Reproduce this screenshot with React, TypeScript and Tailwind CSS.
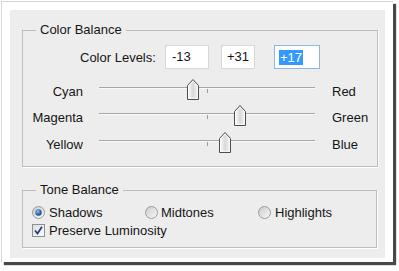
import React from "react";

const TRACK_W = 216;

function Thumb({ value }: { value: number }) {
  const center = TRACK_W / 2 + (value / 100) * (TRACK_W / 2);
  return (
    <svg
      width="12"
      height="21"
      viewBox="0 0 12 21"
      className="absolute top-[1px]"
      style={{ left: Math.round(center - 6) }}
    >
      <defs>
        <linearGradient id={`tg${value}`} x1="0" y1="0" x2="1" y2="0">
          <stop offset="0" stopColor="#ffffff" />
          <stop offset="0.5" stopColor="#d9d9d9" />
          <stop offset="1" stopColor="#f4f4f4" />
        </linearGradient>
      </defs>
      <path
        d="M6 0.5 L11.5 6.5 L11.5 20.5 L0.5 20.5 L0.5 6.5 Z"
        fill={`url(#tg${value})`}
        stroke="#4d4d4d"
        strokeWidth="1"
      />
      <path d="M6 2 L10.3 6.8 L10.3 19.3 L1.7 19.3 L1.7 6.8 Z" fill="none" stroke="#ffffff" strokeWidth="0.8" />
    </svg>
  );
}

function SliderRow({ left, right, value, h }: { left: string; right: string; value: number; h: string }) {
  return (
    <div className={`flex items-center ${h}`}>
      <div className="w-[60px] text-right leading-none">{left}</div>
      <div className="relative ml-[16px] h-full w-[216px]">
        <div className="absolute left-0 right-0 top-[9px] h-[1px] bg-[#a6a6a6]" />
        <div className="absolute left-0 right-0 top-[10px] h-[1px] bg-[#fafafa]" />
        <div className="absolute left-[108px] top-[11px] h-[4px] w-[1px] bg-[#9a9a9a]" />
        <Thumb value={value} />
      </div>
      <div className="ml-[17px] leading-none">{right}</div>
    </div>
  );
}

function Radio({ checked }: { checked?: boolean }) {
  return (
    <svg width="13" height="13" viewBox="0 0 13 13" className="shrink-0">
      <defs>
        <linearGradient id={`rg${checked ? 1 : 0}`} x1="0" y1="0" x2="1" y2="1">
          <stop offset="0" stopColor="#c9c9c9" />
          <stop offset="1" stopColor="#fbfbfb" />
        </linearGradient>
        <radialGradient id="dot" cx="0.4" cy="0.35" r="0.7">
          <stop offset="0" stopColor="#8fc2f0" />
          <stop offset="0.6" stopColor="#2a6bb5" />
          <stop offset="1" stopColor="#173d73" />
        </radialGradient>
      </defs>
      <circle cx="6.5" cy="6.5" r="6" fill={`url(#rg${checked ? 1 : 0})`} stroke="#9a9a9a" strokeWidth="1" />
      {checked && <circle cx="6.5" cy="6.5" r="3.2" fill="url(#dot)" />}
    </svg>
  );
}

function Checkbox() {
  return (
    <svg width="13" height="13" viewBox="0 0 13 13" className="shrink-0">
      <defs>
        <linearGradient id="cbg" x1="0" y1="0" x2="1" y2="1">
          <stop offset="0" stopColor="#dcdcdc" />
          <stop offset="1" stopColor="#ffffff" />
        </linearGradient>
      </defs>
      <rect x="0.5" y="0.5" width="12" height="12" fill="url(#cbg)" stroke="#8e8f8f" />
      <path d="M3 6.5 L5.5 9.5 L10 2.8" fill="none" stroke="#233e7a" strokeWidth="1.8" />
    </svg>
  );
}

export default function App() {
  return (
    <div className="w-[399px] h-[271px] bg-white font-['Liberation_Sans',Arial,sans-serif] text-[13px] text-[#151515]">
      <div className="relative ml-[1px] mt-[1px] w-[392px] h-[261px] border-l border-t border-[#d6d6d6] bg-white pl-[8px] pt-[8px] shadow-[3px_3px_1px_rgba(40,40,40,0.85)]">
        <div className="w-[375px] h-[248px] bg-[#ededed] pl-[12px] pt-[20px]">
          {/* Color Balance group */}
          <div className="relative w-[356px] h-[137px] border border-[#bdbdbd] shadow-[1px_1px_0_#ffffff]">
            <span className="absolute -top-[9px] left-[13px] bg-[#ededed] px-[4px] leading-[16px]">Color Balance</span>
            <div className="flex items-center pl-[57px] pt-[14px]">
              <div className="w-[85px] leading-none">Color Levels:</div>
              <div className="flex h-[24px] w-[44px] items-center border border-[#d8d8d8] bg-white pl-[6px]">-13</div>
              <div className="ml-[12px] flex h-[24px] w-[34px] items-center border border-[#d8d8d8] bg-white pl-[5px]">+31</div>
              <div className="ml-[19px] flex h-[24px] w-[46px] items-center border border-[#8db8e6] bg-white pl-[4px]">
                <span className="bg-[#3399ff] px-[1px] leading-[15px] text-white">+17</span>
              </div>
            </div>
            <div className="mt-[9px]">
              <SliderRow left="Cyan" right="Red" value={-13} h="h-[26px]" />
              <SliderRow left="Magenta" right="Green" value={31} h="h-[27px]" />
              <SliderRow left="Yellow" right="Blue" value={17} h="h-[26px]" />
            </div>
          </div>
          {/* Tone Balance group */}
          <div className="relative mt-[23px] w-[355px] h-[58px] border border-[#bdbdbd] shadow-[1px_1px_0_#ffffff]">
            <span className="absolute -top-[9px] left-[13px] bg-[#ededed] px-[4px] leading-[16px]">Tone Balance</span>
            <div className="flex items-center pl-[9px] pt-[13px] h-[29px]">
              <div className="flex w-[113px] items-center gap-[4px]">
                <Radio checked />
                <span className="leading-none">Shadows</span>
              </div>
              <div className="flex w-[113px] items-center gap-[3px]">
                <Radio />
                <span className="leading-none">Midtones</span>
              </div>
              <div className="flex items-center gap-[4px]">
                <Radio />
                <span className="leading-none">Highlights</span>
              </div>
            </div>
            <div className="mt-[4px] flex items-center gap-[4px] pl-[9px]">
              <Checkbox />
              <span className="leading-none">Preserve Luminosity</span>
            </div>
          </div>
        </div>
      </div>
    </div>
  );
}
